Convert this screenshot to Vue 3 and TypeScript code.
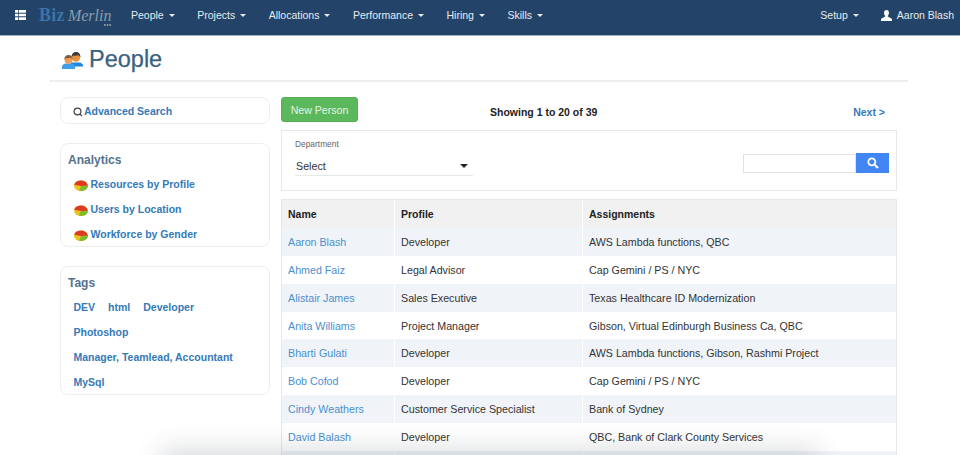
<script setup lang="ts">
const navLeft = ['People', 'Projects', 'Allocations', 'Performance', 'Hiring', 'Skills']
const analytics = ['Resources by Profile', 'Users by Location', 'Workforce by Gender']
const tagRows = [['DEV', 'html', 'Developer'], ['Photoshop'], ['Manager, Teamlead, Accountant'], ['MySql']]
const rows = [
  ['Aaron Blash', 'Developer', 'AWS Lambda functions, QBC'],
  ['Ahmed Faiz', 'Legal Advisor', 'Cap Gemini / PS / NYC'],
  ['Alistair James', 'Sales Executive', 'Texas Healthcare ID Modernization'],
  ['Anita Williams', 'Project Manager', 'Gibson, Virtual Edinburgh Business Ca, QBC'],
  ['Bharti Gulati', 'Developer', 'AWS Lambda functions, Gibson, Rashmi Project'],
  ['Bob Cofod', 'Developer', 'Cap Gemini / PS / NYC'],
  ['Cindy Weathers', 'Customer Service Specialist', 'Bank of Sydney'],
  ['David Balash', 'Developer', 'QBC, Bank of Clark County Services'],
  ['', '', ''],
]
</script>

<template>
  <div class="page">
    <header class="nav">
      <svg class="grid-icon" width="11" height="10" viewBox="0 0 12 11">
        <path fill="#fff" d="M0 0h3.4v3H0zM4.2 0H12v3H4.2zM0 4h3.4v3H0zM4.2 4H12v3H4.2zM0 8h3.4v3H0zM4.2 8H12v3H4.2z" />
      </svg>
      <div class="logo">
        <span class="biz">Biz</span><span class="merlin">Merlin</span>
        <svg class="logo-dots" width="7" height="2" viewBox="0 0 7 2">
          <path fill="#8a9cae" d="M0 0h1.500v2H0zM2.700 0h1.500v2H2.700zM5.400 0H7v2H5.400z" />
        </svg>
      </div>
      <nav class="menu">
        <span v-for="item in navLeft" :key="item" class="menu-item">{{ item }}<i class="caret"></i></span>
      </nav>
      <div class="nav-right">
        <span class="menu-item">Setup<i class="caret"></i></span>
        <span class="user">
          <svg width="11" height="11" viewBox="0 0 12 12">
            <path fill="#fff" d="M6 0C4.200 0 3.300 1.300 3.300 3c0 1.400.5 2.500 1.300 3.200v1L.6 9.200C.2 9.500 0 10 0 10.500V12h12v-1.500c0-.5-.2-1-.6-1.300l-4-2v-1C8.200 5.500 8.700 4.400 8.700 3 8.700 1.300 7.800 0 6 0z" />
          </svg>
          Aaron Blash
        </span>
      </div>
    </header>

    <div class="title-bar">
      <svg class="people-icon" width="21" height="17" viewBox="0 0 21 17">
        <path fill="#1f86de" d="M9 10.500h8c2.200 0 4 1.300 4 3.500v.5H9z" />
        <circle cx="14" cy="5.500" r="4.200" fill="#e8923f" />
        <path fill="#3b3a3c" d="M9.600 5.500C9.300 2 11.500 0 14 0s4.700 2 4.400 5.500c-.7-1.500-1.700-2.300-2.400-2.300-1.600.6-3.400.6-4.500.2-.8.500-1.500 1.100-1.900 2.100z" />
        <path fill="#3f9ee8" d="M0 15c0-2.200 1.800-3.500 4-3.500h5c2.200 0 4 1.300 4 3.500v2H0z" />
        <circle cx="6.500" cy="7.800" r="4" fill="#ee9f55" />
        <path fill="#7c5a44" d="M2.400 7.800C2.200 4.600 4.200 3 6.500 3s4.300 1.600 4.100 4.800c-.6-1.300-1.400-2-2.200-2-1.400.5-2.900.5-4 .1-.8.500-1.600 1-2 1.900z" />
      </svg>
      <h1>People</h1>
    </div>

    <div class="content">
      <aside class="side">
        <div class="box search-box">
          <svg width="10" height="10" viewBox="0 0 10 10" class="q">
            <circle cx="4.500" cy="4.500" r="3.400" fill="none" stroke="#444" stroke-width="1.200" />
            <path d="M7 7l2 2.200" stroke="#444" stroke-width="1.200" />
          </svg>
          <a>Advanced Search</a>
        </div>
        <div class="box analytics">
          <h3>Analytics</h3>
          <div v-for="a in analytics" :key="a" class="an-row">
            <svg width="14" height="11" viewBox="0 0 14 11" class="pie">
              <ellipse cx="7" cy="5.800" rx="7" ry="5.200" fill="#efc31f" />
              <path d="M7 6L.2 4.800C1 2 3.800.6 7 .6s6 1.400 6.900 5.200z" fill="#dd3a22" />
              <path d="M7 6l7-.2c-.2 3-3.200 5.200-6.500 5.200-1 0-1.800-.2-2.500-.5z" fill="#7cbd2c" />
            </svg>
            <a>{{ a }}</a>
          </div>
        </div>
        <div class="box tags">
          <h3>Tags</h3>
          <div v-for="(r, i) in tagRows" :key="i" class="tag-row">
            <a v-for="t in r" :key="t">{{ t }}</a>
          </div>
        </div>
      </aside>

      <main class="main">
        <div class="toolbar">
          <button class="new-btn">New Person</button>
          <b class="showing">Showing 1 to 20 of 39</b>
          <a class="next">Next &gt;</a>
        </div>
        <div class="filter">
          <div class="dept">
            <label>Department</label>
            <div class="select">Select<i class="caret dark"></i></div>
          </div>
          <div class="search">
            <input type="text" />
            <button class="go">
              <svg width="12" height="12" viewBox="0 0 12 12">
                <circle cx="4.800" cy="4.800" r="3.500" fill="none" stroke="#fff" stroke-width="1.800" />
                <path d="M7.500 7.500L11 11" stroke="#fff" stroke-width="2.200" />
              </svg>
            </button>
          </div>
        </div>
        <table class="tbl">
          <thead>
            <tr><th class="c1">Name</th><th class="c2">Profile</th><th>Assignments</th></tr>
          </thead>
          <tbody>
            <tr v-for="(r, i) in rows" :key="i">
              <td class="c1"><a>{{ r[0] }}</a></td>
              <td class="c2">{{ r[1] }}</td>
              <td>{{ r[2] }}</td>
            </tr>
          </tbody>
        </table>
      </main>
    </div>
    <div class="bottom-shade"></div>
  </div>
</template>

<style>
html, body { margin: 0; padding: 0; background: #fff; }
</style>

<style scoped>
.page {
  position: relative;
  width: 960px;
  height: 455px;
  overflow: hidden;
  background: #fff;
  font-family: "Liberation Sans", Arial, sans-serif;
  font-size: 10.7px;
  color: #333;
}
.nav {
  height: 30px;
  padding-bottom: 5px;
  border-bottom: 1px solid #9fb0c0;
  background: #234468;
  display: flex;
  align-items: center;
  color: #e6ebf0;
}
.grid-icon { margin-left: 15px; }
.logo {
  position: relative;
  margin-left: 13px;
  width: 92px;
  white-space: nowrap;
  line-height: 1;
  display: flex;
  align-items: baseline;
}
.logo-dots { position: absolute; left: 65px; top: 18px; }
.biz {
  font-family: "Liberation Serif", serif;
  font-weight: bold;
  font-size: 18px;
  color: #3a74a8;
  letter-spacing: .3px;
}
.merlin {
  font-family: "Liberation Serif", serif;
  font-style: italic;
  font-size: 16px;
  color: #8a9cae;
  margin-left: 3px;
}
.menu { display: flex; }
.menu-item {
  display: inline-flex;
  align-items: center;
  margin-right: 22.500px;
  font-size: 10.5px;
  white-space: nowrap;
}
.caret {
  display: inline-block;
  width: 0;
  height: 0;
  margin-left: 5px;
  border-left: 3px solid transparent;
  border-right: 3px solid transparent;
  border-top: 3px solid #e6ebf0;
}
.caret.dark {
  border-left-width: 4px;
  border-right-width: 4px;
  border-top: 4px solid #222;
  margin: 0;
}
.nav-right { margin-left: auto; display: flex; align-items: center; }
.nav-right .menu-item { margin-right: 22px; }
.user { display: inline-flex; align-items: center; gap: 5px; margin-right: 6px; font-size: 10.5px; white-space: nowrap; }
.title-bar {
  margin: 0 52px 0 49px;
  padding-top: 4px;
  height: 40px;
  border-bottom: 2px solid #eee;
  display: flex;
  align-items: center;
}
.people-icon { margin-left: 13px; }
h1 {
  margin: 0 0 0 6px;
  font-size: 23.5px;
  font-weight: 400;
  color: #3a6180;
  line-height: 1;
  -webkit-text-stroke: .25px #3a6180;
}
.content {
  display: flex;
  align-items: flex-start;
  padding: 15px 63px 0 60px;
  gap: 11px;
}
.side { width: 210px; flex: none; display: flex; flex-direction: column; gap: 19px; }
.box {
  border: 1px solid #eceef0;
  border-radius: 8px;
  box-sizing: border-box;
  padding: 0 7px;
}
a { color: #337ab7; }
.side a { font-weight: bold; font-size: 10.5px; }
.search-box {
  height: 27px;
  display: flex;
  align-items: center;
  padding: 1px 0 0 12px;
  gap: 1px;
}
.q { margin-top: 2px; }
h3 {
  margin: 0 0 4px;
  font-size: 12px;
  font-weight: bold;
  color: #53738c;
  line-height: 15px;
}
.analytics { height: 104px; padding-top: 9px; }
.an-row {
  height: 24.8px;
  display: flex;
  align-items: center;
  padding-left: 5.500px;
  gap: 3px;
}
.pie { margin-top: 3px; }
.tags { height: 129px; padding-top: 9px; }
.tag-row {
  height: 24.8px;
  display: flex;
  align-items: center;
  padding-left: 5.500px;
  gap: 13px;
}
.main { width: 616px; flex: none; }
.toolbar {
  height: 25px;
  display: flex;
  align-items: center;
  margin-bottom: 8px;
}
.new-btn {
  width: 77px;
  height: 25px;
  background: #5cb85c;
  border: 1px solid #55ae55;
  border-radius: 3px;
  color: #e4f4e4;
  font: 10.6px "Liberation Sans", Arial, sans-serif;
  padding: 0;
}
.showing { margin-left: 132px; font-size: 10.5px; color: #222; margin-top: 4px; }
.next { margin-left: auto; margin-right: 12px; font-weight: bold; font-size: 10.5px; margin-top: 4px; }
.filter {
  height: 61px;
  border: 1px solid #e8e8e8;
  box-sizing: border-box;
  display: flex;
  justify-content: space-between;
  margin-bottom: 8px;
}
.dept { margin-left: 13px; padding-top: 8px; width: 178px; }
.dept label { display: block; font-size: 8.4px; color: #666; line-height: 10px; margin-bottom: 7px; }
.select {
  height: 20px;
  border-bottom: 1px solid #e8e8e8;
  display: flex;
  align-items: center;
  justify-content: space-between;
  padding: 0 5px 0 1px;
  box-sizing: border-box;
  color: #333;
}
.search { display: flex; margin: 22px 7px 0 0; height: 20px; }
.search input {
  width: 113px;
  height: 19px;
  box-sizing: border-box;
  margin-top: 1px;
  border: 1px solid #e2e2e2;
  padding: 0;
  outline: none;
}
.go {
  width: 33px;
  height: 20px;
  background: #4285f4;
  border: 0;
  padding: 0;
  display: flex;
  align-items: center;
  justify-content: center;
}
.tbl {
  width: 616px;
  border-collapse: separate;
  border-spacing: 0;
  border: 1px solid #e8e8e8;
  table-layout: fixed;
  font-size: 10.7px;
}
.tbl th, .tbl td {
  padding: 0 6px;
  height: 27.9px;
  box-sizing: border-box;
  text-align: left;
  border-right: 1px solid #fff;
}
.tbl th:last-child, .tbl td:last-child { border-right: 0; }
.tbl th { background: #f1f1f1; color: #222; font-weight: bold; font-size: 10.5px; }
.tbl tbody tr:nth-child(odd) td { background: #f0f4f9; }
.c1 { width: 113px; }
.c2 { width: 188px; }
.tbl td a { color: #4a90d0; }
.bottom-shade {
  position: absolute;
  left: 170px;
  right: 150px;
  bottom: -24px;
  height: 20px;
  box-shadow: 0 0 28px 8px rgba(40, 50, 65, .2);
  pointer-events: none;
}
</style>
